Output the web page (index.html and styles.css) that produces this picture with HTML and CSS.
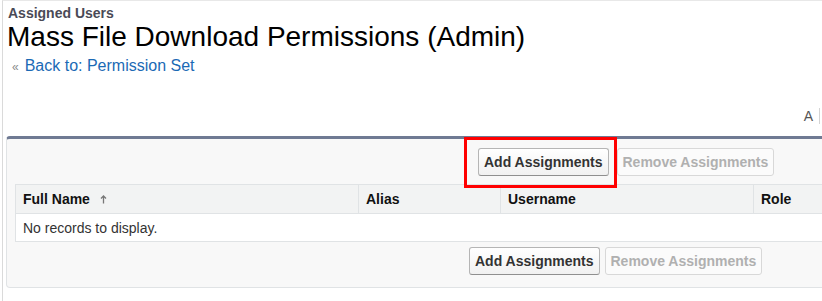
FILE: index.html
```html
<!DOCTYPE html>
<html lang="en">
<head>
    <meta charset="UTF-8">
    <meta name="viewport" content="width=device-width, initial-scale=1.0">
    <title>Assigned Users</title>
    <link rel="stylesheet" href="styles.css">
</head>
<body>
    <div class="page">
        <div class="type">Assigned Users</div>
        <h1 class="title">Mass File Download Permissions (Admin)</h1>
        <div class="back"><span class="raquo">&laquo;</span><a href="#" class="link">Back to: Permission Set</a></div>
        <div class="alpha"><span class="letter">A</span><span class="sep"></span></div>

        <div class="panel">
            <div class="btn-row top">
                <span class="highlight"><button class="btn">Add Assignments</button></span>
                <button class="btn" disabled>Remove Assignments</button>
            </div>
            <table class="list">
                <tr>
                    <th class="c1">Full Name
                        <svg class="sort" width="7" height="9" viewBox="0 0 7 9">
                            <path d="M3.5 1 L3.5 8.5 M1 3.5 L3.5 1 L6 3.5" fill="none" stroke="#777" stroke-width="1.3"/>
                        </svg>
                    </th>
                    <th class="c2">Alias</th>
                    <th class="c3">Username</th>
                    <th class="c4">Role</th>
                </tr>
                <tr>
                    <td colspan="4" class="empty">No records to display.</td>
                </tr>
            </table>
            <div class="btn-row bottom">
                <button class="btn">Add Assignments</button>
                <button class="btn" disabled>Remove Assignments</button>
            </div>
        </div>
    </div>
</body>
</html>
```
FILE: styles.css
```css
body{
    margin: 0;
    font-family: "Liberation Sans", Arial, sans-serif;
    background-color: white;
    overflow: hidden;
}
.page{
    margin-left: 2px;
    border-left: 1px solid #dadada;
    border-top: 1px solid #e8e8e8;
    height: 300px;
    overflow: hidden;
}
.type{
    margin-top: 4px;
    padding-left: 5px;
    font-size: 14px;
    line-height: 16px;
    font-weight: bold;
    color: #4a4a56;
}
.title{
    margin: 0;
    padding-left: 4px;
    font-size: 28px;
    line-height: 32px;
    font-weight: normal;
    color: #000;
}
.back{
    margin-top: 4px;
    padding-left: 9px;
    font-size: 16px;
    line-height: 18px;
}
.raquo{
    color: #8a8a8a;
    font-size: 12px;
    margin-right: 6px;
}
.link{
    color: #1b6ab5;
    text-decoration: none;
}
.alpha{
    margin-top: 32px;
    display: flex;
    justify-content: flex-end;
    align-items: center;
    padding-right: 2px;
    font-size: 14px;
    line-height: 16px;
    color: #555;
}
.sep{
    width: 1px;
    height: 16px;
    margin-left: 6px;
    background-color: #d4d4d4;
}
.panel{
    margin: 12px 0 0 3px;
    width: 900px;
    background-color: #f8f8f8;
    border: 1px solid #e0e3e5;
    border-top: 3px solid #6f7a93;
    border-radius: 4px;
    padding: 9px 0 12px 8px;
}
.btn-row{
    display: flex;
}
.btn-row.top{
    margin-left: 463px;
    gap: 8px;
}
.btn-row.bottom{
    margin-top: 5px;
    margin-left: 454px;
    gap: 5px;
}
.btn{
    margin: 0;
    padding: 5px 5px;
    font-family: inherit;
    font-size: 14px;
    line-height: 16px;
    font-weight: bold;
    color: #333;
    background: linear-gradient(#ffffff, #f1f1f1);
    border: 1px solid #b5b5b5;
    border-bottom-color: #8f8f8f;
    border-radius: 3px;
}
.btn:disabled{
    color: #b0b0b0;
    background: #fbfbfb;
    border-color: #d8d8d8;
}
.highlight{
    position: relative;
    display: flex;
}
.highlight::after{
    content: "";
    position: absolute;
    left: -14px;
    top: -11px;
    right: -8px;
    bottom: -12px;
    border: 3px solid #f00;
}
.list{
    margin-top: 8px;
    width: 880px;
    border-collapse: collapse;
    table-layout: fixed;
}
.list th{
    box-sizing: border-box;
    height: 29px;
    padding: 0 7px;
    text-align: left;
    font-size: 14px;
    font-weight: bold;
    color: #111;
    background-color: #f2f3f3;
    border: 1px solid #e0e3e5;
}
.c1{
    width: 343px;
}
.c2{
    width: 142px;
}
.c3{
    width: 253px;
}
.sort{
    margin-left: 6px;
}
.empty{
    height: 27px;
    padding: 0 7px;
    font-size: 14px;
    color: #333;
    background-color: white;
    border: 1px solid #e0e3e5;
}
```
